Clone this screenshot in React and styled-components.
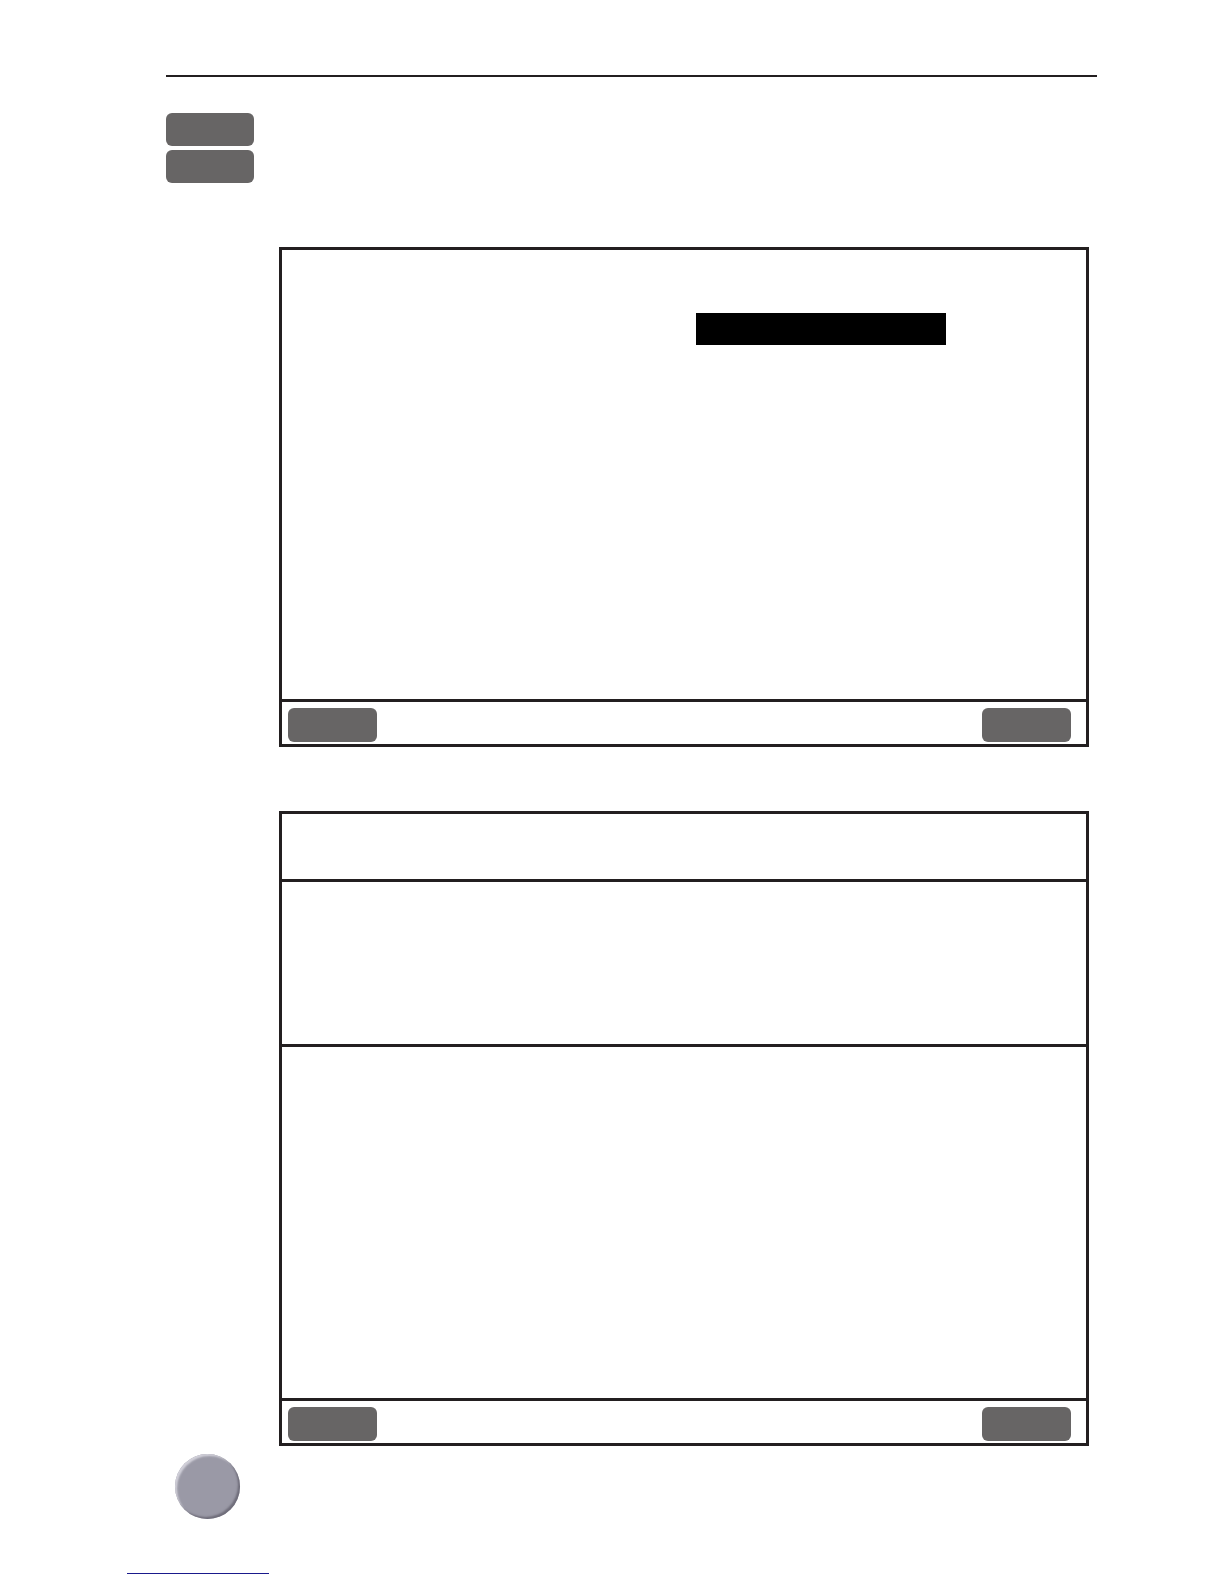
import React from "react";
import styled, { createGlobalStyle } from "styled-components";

const GlobalStyle = createGlobalStyle`
  html, body {
    margin: 0;
    padding: 0;
    background: #ffffff;
    font-family: "Liberation Sans", Arial, sans-serif;
  }
`;

const Page = styled.div`
  width: 1224px;
  height: 1584px;
  padding-top: 75px;
  box-sizing: border-box;
  display: flex;
  flex-direction: column;
  background: #ffffff;
  overflow: hidden;
`;

const Rule = styled.div`
  margin-left: 166px;
  width: 931px;
  height: 2px;
  background: #231f20;
`;

const KeyStack = styled.div`
  margin-left: 166px;
  margin-top: 36px;
  display: flex;
  flex-direction: column;
  gap: 4px;
`;

const Key = styled.div`
  width: 88px;
  height: 33px;
  border-radius: 6px;
  background: #676565;
`;

const Screen = styled.div`
  margin-left: 279px;
  margin-top: 64px;
  width: 810px;
  height: ${(p) => p.$height}px;
  box-sizing: border-box;
  border: 3px solid #231f20;
  display: flex;
  flex-direction: column;
`;

const Section = styled.div`
  height: ${(p) => p.$height}px;
  flex: ${(p) => (p.$grow ? 1 : "none")};
  border-top: ${(p) => (p.$first ? "none" : "3px solid #231f20")};
  box-sizing: border-box;
`;

const MainArea = styled.div`
  flex: 1;
  padding: 63px 0 0 414px;
`;

const Highlight = styled.div`
  width: 250px;
  height: 32px;
  background: #000000;
`;

const Footer = styled.div`
  height: 45px;
  flex: none;
  box-sizing: border-box;
  border-top: 3px solid #231f20;
  display: flex;
  justify-content: space-between;
  align-items: flex-start;
  padding: 6px 15px 0 6px;
`;

const SoftKey = styled.div`
  width: 89px;
  height: 34px;
  border-radius: 6px;
  background: #676565;
`;

const PageBadge = styled.div`
  margin-left: 175px;
  margin-top: 8px;
  width: 65px;
  height: 65px;
  border-radius: 50%;
  background: #9a99a6;
  box-shadow: inset -2px -2px 2px #6f6d7a, inset 2px 2px 2px #d2d1da;
`;

const LinkLine = styled.div`
  margin-left: 127px;
  margin-top: 54px;
  width: 142px;
  height: 1px;
  background: #1a1a8c;
`;

export default function App() {
  return (
    <>
      <GlobalStyle />
      <Page>
        <Rule />
        <KeyStack>
          <Key />
          <Key />
        </KeyStack>

        <Screen $height={500}>
          <MainArea>
            <Highlight />
          </MainArea>
          <Footer>
            <SoftKey />
            <SoftKey />
          </Footer>
        </Screen>

        <Screen $height={635}>
          <Section $first $height={65} />
          <Section $height={165} />
          <Section $grow />
          <Footer>
            <SoftKey />
            <SoftKey />
          </Footer>
        </Screen>

        <PageBadge />
        <LinkLine />
      </Page>
    </>
  );
}
